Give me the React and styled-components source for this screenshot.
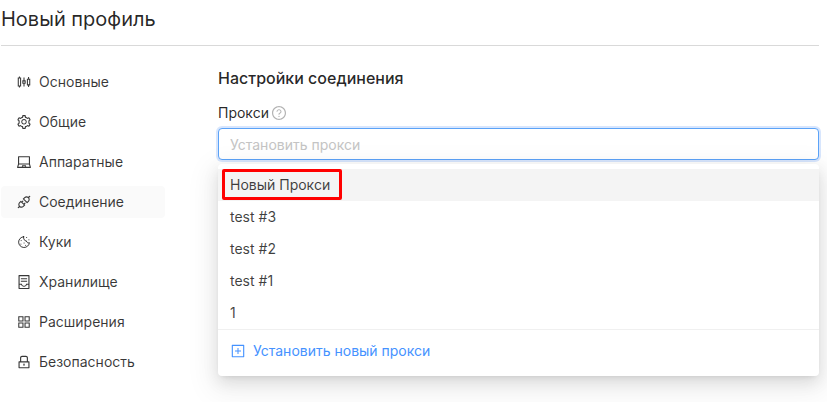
import React from "react";
import styled, { createGlobalStyle } from "styled-components";
import {
  AiOutlineSliders,
  AiOutlineSetting,
  AiOutlineLaptop,
  AiOutlineApi,
  AiOutlineContainer,
  AiOutlineAppstore,
  AiOutlineLock,
  AiOutlineQuestionCircle,
  AiOutlinePlusSquare,
} from "react-icons/ai";

function CookieIcon({ size }) {
  return (
    <svg
      width={size}
      height={size}
      viewBox="0 0 16 16"
      fill="none"
      stroke="currentColor"
      strokeLinecap="round"
      strokeLinejoin="round"
      aria-hidden="true"
    >
      <path d="M7.6 2.7a5.4 5.4 0 1 0 5.8 6c-1.4.5-2.8-.2-3-1.8-1.8.1-3.2-1.7-2.8-4.2z" />
      <path d="M5.2 6.6v.1M4.9 10.1v.1M8.1 9v.1M9.6 11.3v.1M10.6 3.4v.1M12.9 5.8v.1" />
    </svg>
  );
}

const sections = [
  { title: "Основные", icon: AiOutlineSliders },
  { title: "Общие", icon: AiOutlineSetting },
  { title: "Аппаратные", icon: AiOutlineLaptop },
  { title: "Соединение", icon: AiOutlineApi, active: true },
  { title: "Куки", icon: CookieIcon },
  { title: "Хранилище", icon: AiOutlineContainer },
  { title: "Расширения", icon: AiOutlineAppstore },
  { title: "Безопасность", icon: AiOutlineLock },
];

const proxies = ["test #3", "test #2", "test #1", "1"];

function Sidebar() {
  return (
    <Menu>
      {sections.map(({ title, icon: Icon, active }) => (
        <MenuItem
          key={title}
          href="#"
          $active={active}
          aria-current={active ? "page" : undefined}
        >
          <Icon size={16} />
          {title}
        </MenuItem>
      ))}
    </Menu>
  );
}

function ProxySelect() {
  return (
    <Field>
      <LabelRow>
        <Label htmlFor="proxy">Прокси</Label>
        <AiOutlineQuestionCircle size={16} />
      </LabelRow>
      <SelectBox>
        <SelectInput
          id="proxy"
          type="text"
          role="combobox"
          aria-expanded="true"
          aria-controls="proxy-list"
          placeholder="Установить прокси"
        />
        <Dropdown>
          <Options id="proxy-list">
            <li>
              <Option type="button" $active>
                <Marked>Новый Прокси</Marked>
              </Option>
            </li>
            {proxies.map((name) => (
              <li key={name}>
                <Option type="button">{name}</Option>
              </li>
            ))}
          </Options>
          <AddButton type="button">
            <AiOutlinePlusSquare size={16} />
            Установить новый прокси
          </AddButton>
        </Dropdown>
      </SelectBox>
    </Field>
  );
}

function App() {
  return (
    <>
      <GlobalStyle />
      <Page>
        <Header>
          <Title>Новый профиль</Title>
        </Header>
        <Body>
          <Sidebar />
          <Content>
            <Heading>Настройки соединения</Heading>
            <ProxySelect />
          </Content>
        </Body>
      </Page>
    </>
  );
}

export default App;

const GlobalStyle = createGlobalStyle`
  * {
    box-sizing: border-box;
  }

  body {
    margin: 0;
    overflow-x: hidden;
    background: #fff;
    color: rgba(0, 0, 0, 0.85);
    font-family: Inter, "Liberation Sans", sans-serif;
    font-size: 14px;
    line-height: 22px;
  }

  button,
  input {
    font: inherit;
    color: inherit;
  }
`;

const Page = styled.div`
  padding: 4px 8px 24px 1px;
`;

const Header = styled.header`
  padding-bottom: 11px;
  border-bottom: 1px solid #d9d9d9;
`;

const Title = styled.h1`
  margin: 0;
  font-size: 20px;
  font-weight: 400;
  line-height: 30px;
`;

const Body = styled.div`
  display: flex;
  gap: 53px;
  padding-top: 20px;
`;

const Menu = styled.nav`
  display: flex;
  flex-direction: column;
  flex: none;
  gap: 8px;
  width: 164px;
`;

const MenuItem = styled.a`
  display: flex;
  align-items: center;
  gap: 7px;
  height: 32px;
  padding: 0 15px;
  border-radius: 4px;
  background: ${(props) => (props.$active ? "#fafafa" : "transparent")};
  color: rgba(0, 0, 0, 0.78);
  text-decoration: none;
`;

const Content = styled.main`
  flex: 1;
  min-width: 0;
`;

const Heading = styled.h2`
  margin: 0;
  font-size: 16px;
  font-weight: 500;
  line-height: 24px;
`;

const Field = styled.div`
  padding-top: 12px;
`;

const LabelRow = styled.div`
  display: flex;
  align-items: center;
  gap: 2px;
  padding-bottom: 4px;

  svg {
    color: rgba(0, 0, 0, 0.3);
  }
`;

const Label = styled.label``;

const SelectBox = styled.div`
  position: relative;
`;

const SelectInput = styled.input`
  display: block;
  width: 100%;
  height: 32px;
  padding: 0 11px;
  border: 1px solid #5ba3f8;
  border-radius: 4px;
  outline: none;
  background: #fff;
  box-shadow: 0 0 0 2px rgba(60, 130, 246, 0.2);

  &::placeholder {
    color: #c4c4c4;
    opacity: 1;
  }
`;

const Dropdown = styled.div`
  position: absolute;
  top: 100%;
  left: 0;
  right: 0;
  margin-top: 4px;
  border-radius: 4px;
  background: #fff;
  box-shadow:
    0 3px 6px -4px rgba(0, 0, 0, 0.16),
    0 6px 16px rgba(0, 0, 0, 0.1),
    0 9px 28px 8px rgba(0, 0, 0, 0.06);
`;

const Options = styled.ul`
  margin: 0;
  padding: 5px 0 0;
  border-bottom: 1px solid #f0f0f0;
  list-style: none;
`;

const Option = styled.button`
  display: block;
  width: 100%;
  height: 32px;
  padding: 0 12px;
  border: none;
  background: ${(props) => (props.$active ? "#f4f4f4" : "transparent")};
  color: rgba(0, 0, 0, 0.75);
  text-align: left;
`;

const Marked = styled.span`
  position: relative;
  display: inline-block;

  &::after {
    content: "";
    position: absolute;
    inset: -5px -12px -4px -8px;
    border: 3px solid #f00;
    border-radius: 2px;
  }
`;

const AddButton = styled.button`
  display: flex;
  align-items: center;
  gap: 7px;
  width: 100%;
  padding: 10px 12px 14px;
  border: none;
  background: transparent;
  color: #4592ff;
`;
